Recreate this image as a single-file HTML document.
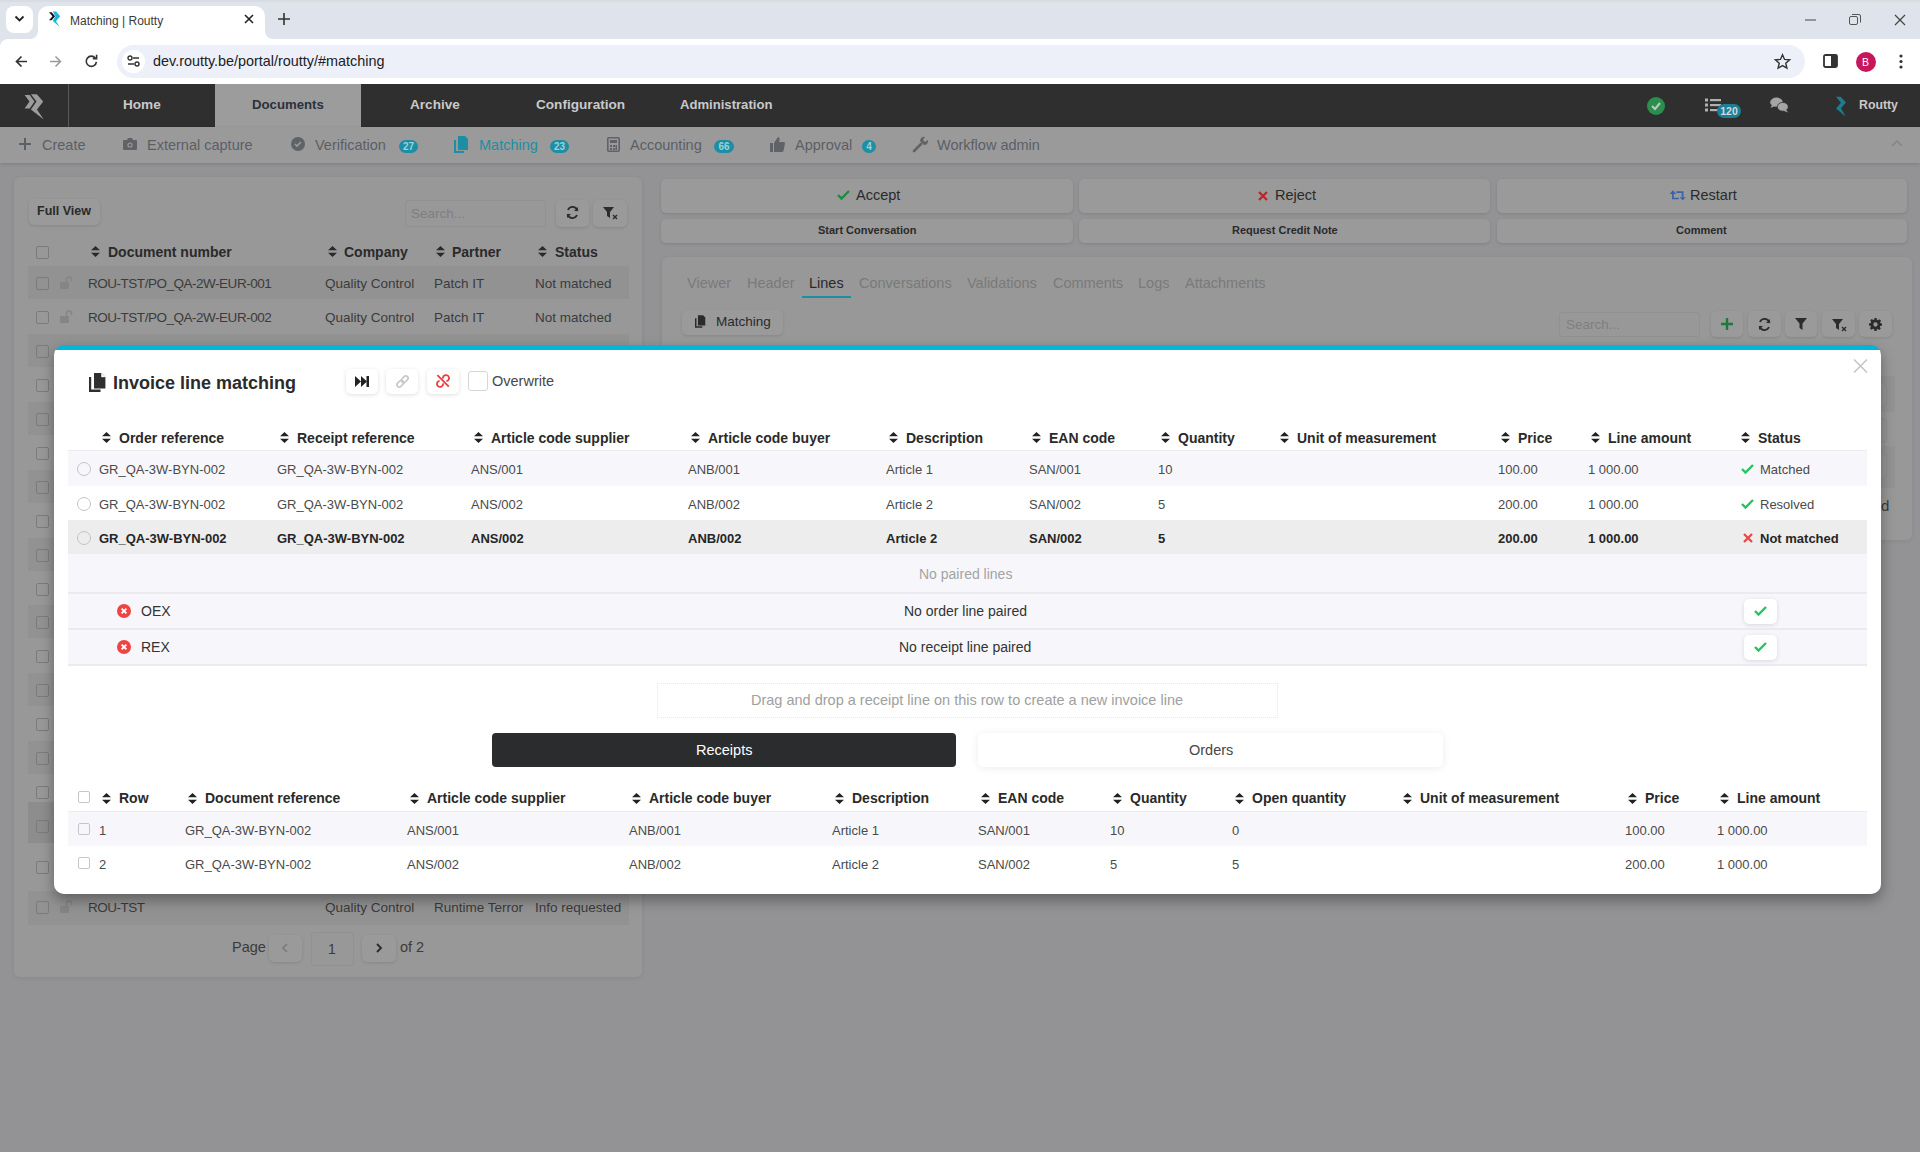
<!DOCTYPE html>
<html><head><meta charset="utf-8">
<style>
*{box-sizing:border-box;margin:0;padding:0}
html,body{width:1920px;height:1152px;overflow:hidden;background:#939395;font-family:"Liberation Sans",sans-serif;position:relative}
.a{position:absolute}
.t{position:absolute;white-space:nowrap;line-height:1}
svg{position:absolute;overflow:visible}
/* chrome */
#tabstrip{left:0;top:0;width:1920px;height:52px;background:#dfe3eb}
#toolbar{left:0;top:39px;width:1920px;height:45px;background:#fff}
#omni{left:117px;top:45px;width:1688px;height:33px;border-radius:17px;background:#edf0f8}
/* app */
#nav{left:0;top:84px;width:1920px;height:43px;background:#2f2f2f}
#subnav{left:0;top:127px;width:1920px;height:36px;background:#9a9a9a;box-shadow:0 1px 3px rgba(0,0,0,.15)}
.navt{font-size:13.6px;font-weight:700;color:#c9c9c9}
.subt{font-size:14.5px;color:#5a5f66;margin-top:1px}
.badge{position:absolute;height:13px;border-radius:7px;background:#1d8ea4;color:#9fd0da;font-size:10px;font-weight:700;line-height:13px;text-align:center}
.panel{background:#989898;border-radius:6px;box-shadow:0 1px 4px rgba(0,0,0,.07)}
.pbtn{background:#9a9a9a;border-radius:5px;box-shadow:0 1px 3px rgba(0,0,0,.12)}
.bgrow{position:absolute;left:28px;width:601px;height:34px}
.bgrow.s{background:#929292}
.bgcb{position:absolute;left:36px;width:13px;height:13px;border:1px solid #7b7b7b;border-radius:2px}
.bgt{font-size:13.5px;color:#3b3b3b}
/* modal */
#modal{left:54px;top:345px;width:1827px;height:549px;background:linear-gradient(#00b5dc 0,#00b5dc 5px,#fff 5px);border-radius:10px;box-shadow:0 6px 14px rgba(0,0,0,.35)}
.hd{font-size:14px;font-weight:700;color:#2a2a2a}
.dt{font-size:13px;color:#4a4a4a}
.dtb{font-size:13px;font-weight:700;color:#262626}
.row{position:absolute;left:68px;width:1799px}
.radio{position:absolute;width:14px;height:14px;border:1px solid #c4c4c4;border-radius:50%}
.cb{position:absolute;width:12px;height:12px;border:1px solid #c6c6c6;border-radius:2px}
.mbtn{position:absolute;background:#fff;border-radius:5px;box-shadow:0 1px 4px rgba(0,0,0,.13)}
</style></head><body>

<!-- ============ CHROME ============ -->
<div id="tabstrip" class="a"></div>
<div class="a" style="left:0;top:0;width:1920px;height:2px;background:#d8dde2"></div>
<div class="a" style="left:38px;top:6px;width:227px;height:40px;background:#fff;border-radius:10px 10px 0 0"></div>
<div id="toolbar" class="a" style="border-radius:8px 0 0 0"></div>
<div class="a" style="left:30px;top:31px;width:8px;height:8px;background:#fff"></div>
<div class="a" style="left:22px;top:23px;width:16px;height:16px;background:#dfe3eb;border-radius:0 0 8px 0"></div>
<div class="a" style="left:265px;top:31px;width:8px;height:8px;background:#fff"></div>
<div class="a" style="left:265px;top:23px;width:16px;height:16px;background:#dfe3eb;border-radius:0 0 0 8px"></div>
<div class="a" style="left:6px;top:6px;width:27px;height:27px;background:#fff;border-radius:8px"></div>
<svg style="left:14px;top:15px" width="11" height="8" viewBox="0 0 11 8"><path d="M1.5 1.5 L5.5 5.5 L9.5 1.5" fill="none" stroke="#222" stroke-width="1.8"/></svg>
<svg style="left:44px;top:8px" width="22" height="22" viewBox="0 0 22 22"><path d="M5 4.2H7.6L11.1 8.2L7.6 12.2H5L8.5 8.2Z" fill="#111"/><path d="M8.8 3.4H12.2L16.2 8.2L12 13.2L15.6 18.7L8.8 13L11.5 8.2Z" fill="#1ab8dc"/></svg>
<div class="t" style="left:70px;top:14.5px;font-size:12px;color:#3a3a3a">Matching | Routty</div>
<svg style="left:244px;top:14px" width="10" height="10" viewBox="0 0 10 10"><path d="M1 1L9 9M9 1L1 9" stroke="#222" stroke-width="1.6"/></svg>
<svg style="left:278px;top:13px" width="12" height="12" viewBox="0 0 12 12"><path d="M6 0V12M0 6H12" stroke="#333" stroke-width="1.6"/></svg>
<!-- window controls -->
<svg style="left:1805px;top:19px" width="11" height="2"><path d="M0 1H11" stroke="#444" stroke-width="1"/></svg>
<svg style="left:1849px;top:14px" width="12" height="11" viewBox="0 0 12 11"><rect x="0.5" y="2.5" width="8" height="8" rx="1.5" fill="none" stroke="#555" stroke-width="1"/><path d="M3 0.5H10A1.5 1.5 0 0 1 11.5 2V8.5" fill="none" stroke="#555" stroke-width="1"/></svg>
<svg style="left:1894px;top:14px" width="12" height="12" viewBox="0 0 12 12"><path d="M1 1L11 11M11 1L1 11" stroke="#444" stroke-width="1.2"/></svg>
<!-- toolbar -->
<div id="omni" class="a"></div>
<svg style="left:15px;top:55px" width="13" height="13" viewBox="0 0 13 13"><path d="M12 6.5H1.5M6.5 1.5L1.5 6.5L6.5 11.5" fill="none" stroke="#333" stroke-width="1.7"/></svg>
<svg style="left:49px;top:55px" width="13" height="13" viewBox="0 0 13 13"><path d="M1 6.5H11.5M6.5 1.5L11.5 6.5L6.5 11.5" fill="none" stroke="#9a9a9a" stroke-width="1.5"/></svg>
<svg style="left:85px;top:55px" width="13" height="13" viewBox="0 0 13 13"><path d="M10.4 3.2A5.1 5.1 0 1 0 11.4 6.8" fill="none" stroke="#333" stroke-width="1.6"/><path d="M7.8 3.6H11.6V-0.2" fill="none" stroke="#333" stroke-width="1.6"/></svg>
<div class="a" style="left:122px;top:50px;width:23px;height:23px;border-radius:50%;background:#fff"></div>
<svg style="left:127px;top:55px" width="13" height="12" viewBox="0 0 13 12"><circle cx="3" cy="3" r="2" fill="none" stroke="#333" stroke-width="1.4"/><path d="M6 3H12" stroke="#333" stroke-width="1.5"/><circle cx="10" cy="9" r="2" fill="none" stroke="#333" stroke-width="1.4"/><path d="M1 9H7" stroke="#333" stroke-width="1.5"/></svg>
<div class="t" style="left:153px;top:54px;font-size:14.4px;color:#202124">dev.routty.be/portal/routty/#matching</div>
<svg style="left:1774px;top:53px" width="17" height="17" viewBox="0 0 24 24"><path d="M12 2.5l2.9 6.6 7.1.6-5.4 4.7 1.6 7-6.2-3.7-6.2 3.7 1.6-7L2 9.7l7.1-.6z" fill="none" stroke="#333" stroke-width="2"/></svg>
<svg style="left:1823px;top:54px" width="15" height="14" viewBox="0 0 15 14"><rect x="1" y="1" width="13" height="12" rx="1.5" fill="none" stroke="#333" stroke-width="1.8"/><rect x="8" y="1" width="6" height="12" fill="#333"/></svg>
<div class="a" style="left:1856px;top:52px;width:20px;height:20px;border-radius:50%;background:#c8165a"></div>
<div class="t" style="left:1862px;top:57px;font-size:10.5px;color:#fff">B</div>
<svg style="left:1899px;top:54px" width="4" height="15" viewBox="0 0 4 15"><circle cx="2" cy="2" r="1.6" fill="#333"/><circle cx="2" cy="7.5" r="1.6" fill="#333"/><circle cx="2" cy="13" r="1.6" fill="#333"/></svg>

<!-- ============ APP NAV ============ -->
<div id="nav" class="a"></div>
<div class="a" style="left:68px;top:84px;width:1px;height:43px;background:#5a5a5a"></div>
<svg style="left:14px;top:88px" width="46" height="36" viewBox="0 0 46 36"><path d="M10.6 7H15.7L20.5 13.6L15.7 20.6H10.6L15.5 13.6Z" fill="#9c9c9c"/><path d="M16.9 6.2H22.8L29.2 13.6L23 21.6L29.7 31.6L16.9 21.6L22.5 13.6Z" fill="#9c9c9c"/></svg>
<div class="t navt" style="left:123px;top:98px">Home</div>
<div class="a" style="left:215px;top:84px;width:146px;height:43px;background:#9c9c9c"></div>
<div class="t navt" style="left:252px;top:98px;color:#2b323b;font-size:13.2px">Documents</div>
<div class="t navt" style="left:410px;top:98px">Archive</div>
<div class="t navt" style="left:536px;top:98px">Configuration</div>
<div class="t navt" style="left:680px;top:98px;font-size:13.1px">Administration</div>
<div class="a" style="left:1647px;top:97px;width:18px;height:18px;border-radius:50%;background:#2a8e4c"></div>
<svg style="left:1651px;top:102px" width="10" height="8" viewBox="0 0 10 8"><path d="M1 4L4 7L9 1" fill="none" stroke="#c4c4c4" stroke-width="2"/></svg>
<svg style="left:1705px;top:98px" width="18" height="14" viewBox="0 0 18 14"><rect x="0" y="0.5" width="3" height="3" fill="#b0b0b0"/><rect x="0" y="5.5" width="3" height="3" fill="#b0b0b0"/><rect x="0" y="10.5" width="3" height="3" fill="#b0b0b0"/><rect x="5" y="1" width="11" height="2.2" fill="#b0b0b0"/><rect x="5" y="6" width="11" height="2.2" fill="#b0b0b0"/><rect x="5" y="11" width="11" height="2.2" fill="#b0b0b0"/></svg>
<div class="badge" style="left:1717px;top:104px;width:24px;height:14px;line-height:14px;font-size:10.5px;color:#cfdadd;font-weight:700;background:#1d7f93">120</div>
<svg style="left:1770px;top:97px" width="19" height="16" viewBox="0 0 19 16"><ellipse cx="6.5" cy="5.2" rx="6.3" ry="4.6" fill="#a5a5a5"/><path d="M2 8L0.5 11L5 9Z" fill="#a5a5a5"/><ellipse cx="12.8" cy="9.8" rx="5.5" ry="4.4" fill="#a5a5a5" stroke="#2f2f2f" stroke-width="0.8"/><path d="M16 12.5L18 15.5L13.5 13.8Z" fill="#a5a5a5"/></svg>
<svg style="left:1830px;top:90px" width="24" height="32" viewBox="0 0 24 32"><path d="M6 6.7H10.7L15.9 12.6L11 18.3L15.7 26.7L6.1 18.5L10.9 12.8Z" fill="#1b7d8f"/></svg>
<div class="t navt" style="left:1859px;top:99px;font-size:12.3px">Routty</div>

<!-- ============ SUB NAV ============ -->
<div id="subnav" class="a"></div>
<svg style="left:19px;top:138px" width="12" height="12" viewBox="0 0 12 12"><path d="M6 0V12M0 6H12" stroke="#5a5f66" stroke-width="2"/></svg>
<div class="t subt" style="left:42px;top:137px">Create</div>
<svg style="left:123px;top:138px" width="14" height="12" viewBox="0 0 14 12"><path d="M0 3Q0 2 1 2H4L5 0H9L10 2H13Q14 2 14 3V11Q14 12 13 12H1Q0 12 0 11Z" fill="#5f6368"/><circle cx="7" cy="7" r="2.6" fill="#9a9a9a"/><circle cx="7" cy="7" r="1.5" fill="#5f6368"/></svg>
<div class="t subt" style="left:147px;top:137px">External capture</div>
<div class="a" style="left:291px;top:137px;width:14px;height:14px;border-radius:50%;background:#5f6368"></div>
<svg style="left:294px;top:141px" width="8" height="6" viewBox="0 0 8 6"><path d="M1 3L3 5L7 1" fill="none" stroke="#9a9a9a" stroke-width="1.6"/></svg>
<div class="t subt" style="left:315px;top:137px">Verification</div>
<div class="badge" style="left:399px;top:140px;width:19px">27</div>
<svg style="left:454px;top:136px" width="15" height="17" viewBox="0 0 15 17"><path d="M0 4H2V15H10V17H0Z" fill="#1d8ea4"/><path d="M4 0H11L14 3V14H4Z" fill="#1d8ea4"/></svg>
<div class="t subt" style="left:479px;top:137px;color:#1d8ea4">Matching</div>
<div class="badge" style="left:550px;top:140px;width:19px">23</div>
<svg style="left:607px;top:137px" width="13" height="15" viewBox="0 0 13 15"><rect x="0.8" y="0.8" width="11.4" height="13.4" rx="1" fill="none" stroke="#5f6368" stroke-width="1.6"/><rect x="3" y="3" width="7" height="3" fill="#5f6368"/><rect x="3" y="8" width="2" height="2" fill="#5f6368"/><rect x="6" y="8" width="2" height="2" fill="#5f6368"/><rect x="3" y="11" width="2" height="2" fill="#5f6368"/><rect x="6" y="11" width="2" height="2" fill="#5f6368"/><rect x="8.5" y="8" width="1.5" height="5" fill="#5f6368"/></svg>
<div class="t subt" style="left:630px;top:137px">Accounting</div>
<div class="badge" style="left:714px;top:140px;width:20px">66</div>
<svg style="left:770px;top:137px" width="15" height="15" viewBox="0 0 15 15"><rect x="0" y="6" width="3" height="9" fill="#5f6368"/><path d="M4 6L8 0Q10 0 9.5 3L9 5H14Q15 5 15 6.5L13.5 14Q13 15 12 15H4Z" fill="#5f6368"/></svg>
<div class="t subt" style="left:795px;top:137px">Approval</div>
<div class="badge" style="left:862px;top:140px;width:14px">4</div>
<svg style="left:913px;top:137px" width="15" height="15" viewBox="0 0 15 15"><path d="M1 14L8 7" stroke="#5f6368" stroke-width="2.6" stroke-linecap="round"/><path d="M7 4A4 4 0 0 1 12 0L10 3L12 5L15 3A4 4 0 0 1 11 8" fill="#5f6368"/></svg>
<div class="t subt" style="left:937px;top:137px">Workflow admin</div>
<svg style="left:1891px;top:140px" width="12" height="7" viewBox="0 0 12 7"><path d="M1 6L6 1L11 6" fill="none" stroke="#858585" stroke-width="1.5"/></svg>

<!-- ============ LEFT PANEL ============ -->
<div class="a panel" style="left:14px;top:177px;width:628px;height:800px"></div>
<div class="a pbtn" style="left:29px;top:199px;width:71px;height:26px"></div>
<div class="t" style="left:37px;top:205px;font-size:12.5px;font-weight:700;color:#2a2a2a">Full View</div>
<div class="a" style="left:405px;top:200px;width:141px;height:27px;border:1px solid #919191;border-radius:3px"></div>
<div class="t" style="left:411px;top:207px;font-size:13.5px;color:#7f7f7f">Search...</div>
<div class="a pbtn" style="left:556px;top:200px;width:33px;height:27px"></div>
<svg style="left:566px;top:206px" width="13" height="13" viewBox="0 0 13 13"><path d="M11.5 5A5 5 0 0 0 2 4M1.5 8A5 5 0 0 0 11 9" fill="none" stroke="#2c2c2c" stroke-width="1.8"/><path d="M12 1V5H8Z" fill="#2c2c2c"/><path d="M1 12V8H5Z" fill="#2c2c2c"/></svg>
<div class="a pbtn" style="left:593px;top:200px;width:34px;height:27px"></div>
<svg style="left:603px;top:207px" width="15" height="13" viewBox="0 0 15 13"><path d="M0 0H11L7 5V11L4 9V5Z" fill="#2c2c2c"/><path d="M10 8L14 12M14 8L10 12" stroke="#2c2c2c" stroke-width="1.4"/></svg>
<div class="bgcb" style="top:246px"></div>
<div id="bghead"></div>
<div class="a" style="left:28px;top:266px;width:601px;height:1px;background:#8c8c8c"></div>

<!-- ============ RIGHT PANEL ============ -->
<div class="a pbtn" style="left:661px;top:179px;width:412px;height:34px"></div>
<div class="a pbtn" style="left:1079px;top:179px;width:411px;height:34px"></div>
<div class="a pbtn" style="left:1497px;top:179px;width:410px;height:34px"></div>
<svg style="left:837px;top:190px" width="13" height="10" viewBox="0 0 13 10"><path d="M1 5L4.5 8.5L12 1" fill="none" stroke="#1f8a3e" stroke-width="2.4"/></svg>
<div class="t" style="left:856px;top:188px;font-size:14.5px;color:#2a2a2a">Accept</div>
<svg style="left:1258px;top:191px" width="10" height="10" viewBox="0 0 10 10"><path d="M1 1L9 9M9 1L1 9" stroke="#b8282a" stroke-width="2.2"/></svg>
<div class="t" style="left:1275px;top:188px;font-size:14.5px;color:#2a2a2a">Reject</div>
<svg style="left:1668px;top:189px" width="20" height="13" viewBox="0 0 20 13"><path d="M4.9 1.2L8.2 5H1.6Z" fill="#3a63ad"/><path d="M4.9 4V9.5H10.8M8.3 3.2H14.6V8.5" fill="none" stroke="#3a63ad" stroke-width="1.7"/><path d="M11.6 8.2H17.8L14.7 11.2Z" fill="#3a63ad"/></svg>
<div class="t" style="left:1690px;top:188px;font-size:14.5px;color:#2a2a2a">Restart</div>
<div class="a pbtn" style="left:661px;top:219px;width:412px;height:24px"></div>
<div class="a pbtn" style="left:1079px;top:219px;width:411px;height:24px"></div>
<div class="a pbtn" style="left:1497px;top:219px;width:410px;height:24px"></div>
<div class="t" style="left:818px;top:225px;font-size:11px;font-weight:700;color:#2a2a2a">Start Conversation</div>
<div class="t" style="left:1232px;top:225px;font-size:11px;font-weight:700;color:#2a2a2a">Request Credit Note</div>
<div class="t" style="left:1676px;top:225px;font-size:11px;font-weight:700;color:#2a2a2a">Comment</div>
<div class="a panel" style="left:662px;top:257px;width:1250px;height:283px"></div>
<div class="t" style="left:687px;top:276px;font-size:14.5px;color:#7a7a7a">Viewer</div>
<div class="t" style="left:747px;top:276px;font-size:14.5px;color:#7a7a7a">Header</div>
<div class="t" style="left:809px;top:276px;font-size:14.5px;color:#2a2a2a">Lines</div>
<div class="a" style="left:802px;top:296px;width:49px;height:2px;background:#1d8ea4"></div>
<div class="t" style="left:859px;top:276px;font-size:14.5px;color:#7a7a7a">Conversations</div>
<div class="t" style="left:967px;top:276px;font-size:14.5px;color:#7a7a7a">Validations</div>
<div class="t" style="left:1053px;top:276px;font-size:14.5px;color:#7a7a7a">Comments</div>
<div class="t" style="left:1138px;top:276px;font-size:14.5px;color:#7a7a7a">Logs</div>
<div class="t" style="left:1185px;top:276px;font-size:14.5px;color:#7a7a7a">Attachments</div>
<div class="a pbtn" style="left:682px;top:310px;width:101px;height:25px"></div>
<svg style="left:695px;top:315px" width="11" height="13" viewBox="0 0 15 17"><path d="M0 4H2V15H10V17H0Z" fill="#2a2a2a"/><path d="M4 0H11L14 3V14H4Z" fill="#2a2a2a"/></svg>
<div class="t" style="left:716px;top:315px;font-size:13.5px;color:#2a2a2a">Matching</div>
<div class="a" style="left:1559px;top:312px;width:141px;height:25px;border:1px solid #919191;border-radius:3px"></div>
<div class="t" style="left:1566px;top:318px;font-size:13.5px;color:#7f7f7f">Search...</div>
<div class="a pbtn" style="left:1711px;top:311px;width:32px;height:26px"></div>
<div class="a pbtn" style="left:1748px;top:311px;width:33px;height:26px"></div>
<div class="a pbtn" style="left:1785px;top:311px;width:32px;height:26px"></div>
<div class="a pbtn" style="left:1822px;top:311px;width:33px;height:26px"></div>
<div class="a pbtn" style="left:1859px;top:311px;width:33px;height:26px"></div>
<svg style="left:1721px;top:318px" width="12" height="12" viewBox="0 0 12 12"><path d="M6 0V12M0 6H12" stroke="#1d7a3a" stroke-width="2.4"/></svg>
<svg style="left:1758px;top:318px" width="13" height="13" viewBox="0 0 13 13"><path d="M11.5 5A5 5 0 0 0 2 4M1.5 8A5 5 0 0 0 11 9" fill="none" stroke="#2c2c2c" stroke-width="1.8"/><path d="M12 1V5H8Z" fill="#2c2c2c"/><path d="M1 12V8H5Z" fill="#2c2c2c"/></svg>
<svg style="left:1795px;top:318px" width="12" height="12" viewBox="0 0 12 12"><path d="M0 0H12L7.5 5.5V12L4.5 10V5.5Z" fill="#2c2c2c"/></svg>
<svg style="left:1832px;top:319px" width="15" height="13" viewBox="0 0 15 13"><path d="M0 0H11L7 5V11L4 9V5Z" fill="#2c2c2c"/><path d="M10 8L14 12M14 8L10 12" stroke="#2c2c2c" stroke-width="1.4"/></svg>
<svg style="left:1869px;top:318px" width="13" height="13" viewBox="0 0 24 24"><path d="M10 0h4l.6 3.2 2.2.9 2.7-1.9 2.8 2.8-1.9 2.7.9 2.2L24 10v4l-3.2.6-.9 2.2 1.9 2.7-2.8 2.8-2.7-1.9-2.2.9L14 24h-4l-.6-3.2-2.2-.9-2.7 1.9-2.8-2.8 1.9-2.7-.9-2.2L0 14v-4l3.2-.6.9-2.2L2.2 4.5 5 1.7l2.7 1.9 2.2-.9z M12 8a4 4 0 1 0 0 8a4 4 0 1 0 0-8z" fill="#2c2c2c" fill-rule="evenodd"/></svg>

<svg style="left:91px;top:246px" width="9" height="11" viewBox="0 0 9 11"><path d="M4.5 0L9 4.2H0Z M4.5 11L9 6.8H0Z" fill="#2a2a2a"/></svg>
<div class="t " style="left:108px;top:245px;font-size:14px;font-weight:700;color:#2a2a2a">Document number</div>
<svg style="left:328px;top:246px" width="9" height="11" viewBox="0 0 9 11"><path d="M4.5 0L9 4.2H0Z M4.5 11L9 6.8H0Z" fill="#2a2a2a"/></svg>
<div class="t " style="left:344px;top:245px;font-size:14px;font-weight:700;color:#2a2a2a">Company</div>
<svg style="left:436px;top:246px" width="9" height="11" viewBox="0 0 9 11"><path d="M4.5 0L9 4.2H0Z M4.5 11L9 6.8H0Z" fill="#2a2a2a"/></svg>
<div class="t " style="left:452px;top:245px;font-size:14px;font-weight:700;color:#2a2a2a">Partner</div>
<svg style="left:538px;top:246px" width="9" height="11" viewBox="0 0 9 11"><path d="M4.5 0L9 4.2H0Z M4.5 11L9 6.8H0Z" fill="#2a2a2a"/></svg>
<div class="t " style="left:555px;top:245px;font-size:14px;font-weight:700;color:#2a2a2a">Status</div>
<div class="a" style="left:28px;top:266px;width:601px;height:33px;background:#929292"></div>
<div class="bgcb" style="top:277px"></div>
<svg style="left:60px;top:276px" width="14" height="13" viewBox="0 0 14 13"><rect x="0" y="6" width="9" height="7" rx="1" fill="#858585"/><path d="M6.5 6V3.5A2.5 2.5 0 0 1 11.5 3.5V5" fill="none" stroke="#858585" stroke-width="1.6"/></svg>
<div class="t bgt" style="left:88px;top:277px;letter-spacing:-0.48px">ROU-TST/PO_QA-2W-EUR-001</div>
<div class="t bgt" style="left:325px;top:277px;">Quality Control</div>
<div class="t bgt" style="left:434px;top:277px;">Patch IT</div>
<div class="t bgt" style="left:535px;top:277px;">Not matched</div>
<div class="bgcb" style="top:311px"></div>
<svg style="left:60px;top:310px" width="14" height="13" viewBox="0 0 14 13"><rect x="0" y="6" width="9" height="7" rx="1" fill="#858585"/><path d="M6.5 6V3.5A2.5 2.5 0 0 1 11.5 3.5V5" fill="none" stroke="#858585" stroke-width="1.6"/></svg>
<div class="t bgt" style="left:88px;top:311px;letter-spacing:-0.48px">ROU-TST/PO_QA-2W-EUR-002</div>
<div class="t bgt" style="left:325px;top:311px;">Quality Control</div>
<div class="t bgt" style="left:434px;top:311px;">Patch IT</div>
<div class="t bgt" style="left:535px;top:311px;">Not matched</div>
<div class="a" style="left:28px;top:334px;width:601px;height:33px;background:#929292"></div>
<div class="bgcb" style="top:345px"></div>
<div class="bgcb" style="top:379px"></div>
<div class="a" style="left:28px;top:402px;width:601px;height:33px;background:#929292"></div>
<div class="bgcb" style="top:413px"></div>
<div class="bgcb" style="top:447px"></div>
<div class="a" style="left:28px;top:470px;width:601px;height:33px;background:#929292"></div>
<div class="bgcb" style="top:481px"></div>
<div class="bgcb" style="top:515px"></div>
<div class="a" style="left:28px;top:538px;width:601px;height:33px;background:#929292"></div>
<div class="bgcb" style="top:549px"></div>
<div class="bgcb" style="top:583px"></div>
<div class="a" style="left:28px;top:605px;width:601px;height:33px;background:#929292"></div>
<div class="bgcb" style="top:616px"></div>
<div class="bgcb" style="top:650px"></div>
<div class="a" style="left:28px;top:673px;width:601px;height:33px;background:#929292"></div>
<div class="bgcb" style="top:684px"></div>
<div class="bgcb" style="top:718px"></div>
<div class="a" style="left:28px;top:741px;width:601px;height:33px;background:#929292"></div>
<div class="bgcb" style="top:752px"></div>
<div class="bgcb" style="top:786px"></div>
<div class="a" style="left:28px;top:802px;width:601px;height:41px;background:#8d8d8d"></div>
<div class="bgcb" style="top:820px"></div>
<div class="bgcb" style="top:861px"></div>
<div class="a" style="left:28px;top:891px;width:601px;height:34px;background:#929292"></div>
<div class="bgcb" style="top:901px"></div>
<svg style="left:60px;top:900px" width="14" height="13" viewBox="0 0 14 13"><rect x="0" y="6" width="9" height="7" rx="1" fill="#858585"/><path d="M6.5 6V3.5A2.5 2.5 0 0 1 11.5 3.5V5" fill="none" stroke="#858585" stroke-width="1.6"/></svg>
<div class="t bgt" style="left:88px;top:901px;letter-spacing:-0.48px">ROU-TST</div>
<div class="t bgt" style="left:325px;top:901px;">Quality Control</div>
<div class="t bgt" style="left:434px;top:901px;">Runtime Terror</div>
<div class="t bgt" style="left:535px;top:901px;">Info requested</div>
<div class="t bgt" style="left:232px;top:940px;font-size:14.5px">Page</div>
<div class="a pbtn" style="left:269px;top:935px;width:33px;height:27px"></div>
<svg style="left:282px;top:943px" width="6" height="10" viewBox="0 0 6 10"><path d="M5 1L1 5L5 9" fill="none" stroke="#7a7a7a" stroke-width="1.6"/></svg>
<div class="a" style="left:311px;top:932px;width:43px;height:34px;border:1px solid #919191;border-radius:3px"></div>
<div class="t bgt" style="left:328px;top:942px;font-size:14px">1</div>
<div class="a pbtn" style="left:362px;top:935px;width:34px;height:27px"></div>
<svg style="left:376px;top:943px" width="6" height="10" viewBox="0 0 6 10"><path d="M1 1L5 5L1 9" fill="none" stroke="#2a2a2a" stroke-width="1.8"/></svg>
<div class="t bgt" style="left:400px;top:940px;font-size:14.5px">of 2</div>
<div class="a" style="left:1860px;top:376px;width:35px;height:36px;background:#939393"></div>
<div class="a" style="left:1860px;top:446px;width:35px;height:42px;background:#939393"></div>
<div class="a" style="left:1840px;top:383px;width:47px;height:24px;border:1px solid #8f8f8f;border-radius:4px;background:#969696"></div>
<div class="a" style="left:1840px;top:418px;width:47px;height:25px;border:1px solid #8f8f8f;border-radius:4px;background:#969696"></div>
<div class="a" style="left:1840px;top:453px;width:47px;height:25px;border:1px solid #8f8f8f;border-radius:4px;background:#969696"></div>
<div class="t bgt" style="left:1881px;top:498px;font-size:15px">d</div>

<!-- ============ MODAL ============ -->
<div id="modal" class="a"></div>
<svg style="left:89px;top:373px" width="17" height="19" viewBox="0 0 17 19"><path d="M0 4H2.2V16.6H11.5V19H0Z" fill="#2f2f2f"/><path d="M5 0H12.5L16.4 3.9V15.6H5Z" fill="#2f2f2f"/><path d="M12.5 0V3.9H16.4" fill="#fff" stroke="#fff" stroke-width="0.5"/></svg>
<div class="t " style="left:113px;top:374px;font-size:18px;font-weight:700;color:#2b2b2b">Invoice line matching</div>
<div class="mbtn" style="left:346px;top:369px;width:32px;height:25px"></div>
<div class="mbtn" style="left:386px;top:369px;width:32px;height:25px"></div>
<div class="mbtn" style="left:427px;top:369px;width:32px;height:25px"></div>
<svg style="left:355px;top:376px" width="14" height="11" viewBox="0 0 14 11"><path d="M0 0L6 5.5L0 11Z M6 0L12 5.5L6 11Z" fill="#222"/><rect x="11.5" y="0" width="2.5" height="11" fill="#222"/></svg>
<svg style="left:395px;top:374px" width="15" height="15" viewBox="0 0 15 15"><g transform="rotate(45 7.5 7.5)" fill="none" stroke="#c8c8c8" stroke-width="1.7"><rect x="5.2" y="0.6" width="4.6" height="7.6" rx="2.3"/><rect x="5.2" y="6.8" width="4.6" height="7.6" rx="2.3"/></g></svg>
<svg style="left:436px;top:374px" width="14" height="14" viewBox="0 0 14 14"><g fill="none" stroke="#ea3d3d" stroke-width="1.8"><path d="M1.4 1.2L12.8 12.6"/><path d="M6.9 4.6A3.1 3.1 0 1 1 10.4 7.2"/><path d="M7.1 9.4A3.1 3.1 0 1 1 3.6 6.8"/></g></svg>
<div class="a" style="left:468px;top:371px;width:20px;height:20px;border:1px solid #d6d6d6;border-radius:3px"></div>
<div class="t " style="left:492px;top:374px;font-size:14.5px;color:#474747">Overwrite</div>
<svg style="left:1853px;top:359px" width="15" height="14" viewBox="0 0 15 14"><path d="M1 0.5L14 13.5M14 0.5L1 13.5" stroke="#c6c6c6" stroke-width="1.6"/></svg>
<svg style="left:102px;top:432px" width="9" height="11" viewBox="0 0 9 11"><path d="M4.5 0L9 4.2H0Z M4.5 11L9 6.8H0Z" fill="#222"/></svg>
<div class="t hd" style="left:119px;top:431px;">Order reference</div>
<svg style="left:280px;top:432px" width="9" height="11" viewBox="0 0 9 11"><path d="M4.5 0L9 4.2H0Z M4.5 11L9 6.8H0Z" fill="#222"/></svg>
<div class="t hd" style="left:297px;top:431px;">Receipt reference</div>
<svg style="left:474px;top:432px" width="9" height="11" viewBox="0 0 9 11"><path d="M4.5 0L9 4.2H0Z M4.5 11L9 6.8H0Z" fill="#222"/></svg>
<div class="t hd" style="left:491px;top:431px;">Article code supplier</div>
<svg style="left:691px;top:432px" width="9" height="11" viewBox="0 0 9 11"><path d="M4.5 0L9 4.2H0Z M4.5 11L9 6.8H0Z" fill="#222"/></svg>
<div class="t hd" style="left:708px;top:431px;">Article code buyer</div>
<svg style="left:889px;top:432px" width="9" height="11" viewBox="0 0 9 11"><path d="M4.5 0L9 4.2H0Z M4.5 11L9 6.8H0Z" fill="#222"/></svg>
<div class="t hd" style="left:906px;top:431px;">Description</div>
<svg style="left:1032px;top:432px" width="9" height="11" viewBox="0 0 9 11"><path d="M4.5 0L9 4.2H0Z M4.5 11L9 6.8H0Z" fill="#222"/></svg>
<div class="t hd" style="left:1049px;top:431px;">EAN code</div>
<svg style="left:1161px;top:432px" width="9" height="11" viewBox="0 0 9 11"><path d="M4.5 0L9 4.2H0Z M4.5 11L9 6.8H0Z" fill="#222"/></svg>
<div class="t hd" style="left:1178px;top:431px;">Quantity</div>
<svg style="left:1280px;top:432px" width="9" height="11" viewBox="0 0 9 11"><path d="M4.5 0L9 4.2H0Z M4.5 11L9 6.8H0Z" fill="#222"/></svg>
<div class="t hd" style="left:1297px;top:431px;">Unit of measurement</div>
<svg style="left:1501px;top:432px" width="9" height="11" viewBox="0 0 9 11"><path d="M4.5 0L9 4.2H0Z M4.5 11L9 6.8H0Z" fill="#222"/></svg>
<div class="t hd" style="left:1518px;top:431px;">Price</div>
<svg style="left:1591px;top:432px" width="9" height="11" viewBox="0 0 9 11"><path d="M4.5 0L9 4.2H0Z M4.5 11L9 6.8H0Z" fill="#222"/></svg>
<div class="t hd" style="left:1608px;top:431px;">Line amount</div>
<svg style="left:1741px;top:432px" width="9" height="11" viewBox="0 0 9 11"><path d="M4.5 0L9 4.2H0Z M4.5 11L9 6.8H0Z" fill="#222"/></svg>
<div class="t hd" style="left:1758px;top:431px;">Status</div>
<div class="a" style="left:68px;top:450px;width:1799px;height:1px;background:#ececf0"></div>
<div class="row" style="top:451px;height:35px;background:#f7f7fb"></div>
<div class="radio" style="left:77px;top:462px"></div>
<div class="t dt" style="left:99px;top:463px;">GR_QA-3W-BYN-002</div>
<div class="t dt" style="left:277px;top:463px;">GR_QA-3W-BYN-002</div>
<div class="t dt" style="left:471px;top:463px;">ANS/001</div>
<div class="t dt" style="left:688px;top:463px;">ANB/001</div>
<div class="t dt" style="left:886px;top:463px;">Article 1</div>
<div class="t dt" style="left:1029px;top:463px;">SAN/001</div>
<div class="t dt" style="left:1158px;top:463px;">10</div>
<div class="t dt" style="left:1498px;top:463px;">100.00</div>
<div class="t dt" style="left:1588px;top:463px;">1 000.00</div>
<svg style="left:1741px;top:464px" width="13" height="10" viewBox="0 0 13 10"><path d="M1 5L4.5 8.5L12 1" fill="none" stroke="#22c55e" stroke-width="2.4"/></svg>
<div class="t dt" style="left:1760px;top:463px;">Matched</div>
<div class="row" style="top:486px;height:34px;background:#ffffff"></div>
<div class="radio" style="left:77px;top:497px"></div>
<div class="t dt" style="left:99px;top:498px;">GR_QA-3W-BYN-002</div>
<div class="t dt" style="left:277px;top:498px;">GR_QA-3W-BYN-002</div>
<div class="t dt" style="left:471px;top:498px;">ANS/002</div>
<div class="t dt" style="left:688px;top:498px;">ANB/002</div>
<div class="t dt" style="left:886px;top:498px;">Article 2</div>
<div class="t dt" style="left:1029px;top:498px;">SAN/002</div>
<div class="t dt" style="left:1158px;top:498px;">5</div>
<div class="t dt" style="left:1498px;top:498px;">200.00</div>
<div class="t dt" style="left:1588px;top:498px;">1 000.00</div>
<svg style="left:1741px;top:499px" width="13" height="10" viewBox="0 0 13 10"><path d="M1 5L4.5 8.5L12 1" fill="none" stroke="#22c55e" stroke-width="2.4"/></svg>
<div class="t dt" style="left:1760px;top:498px;">Resolved</div>
<div class="row" style="top:520px;height:34px;background:#ededed"></div>
<div class="radio" style="left:77px;top:531px"></div>
<div class="t dtb" style="left:99px;top:532px;">GR_QA-3W-BYN-002</div>
<div class="t dtb" style="left:277px;top:532px;">GR_QA-3W-BYN-002</div>
<div class="t dtb" style="left:471px;top:532px;">ANS/002</div>
<div class="t dtb" style="left:688px;top:532px;">ANB/002</div>
<div class="t dtb" style="left:886px;top:532px;">Article 2</div>
<div class="t dtb" style="left:1029px;top:532px;">SAN/002</div>
<div class="t dtb" style="left:1158px;top:532px;">5</div>
<div class="t dtb" style="left:1498px;top:532px;">200.00</div>
<div class="t dtb" style="left:1588px;top:532px;">1 000.00</div>
<svg style="left:1743px;top:533px" width="10" height="10" viewBox="0 0 10 10"><path d="M1 1L9 9M9 1L1 9" stroke="#ef4444" stroke-width="2.2"/></svg>
<div class="t dtb" style="left:1760px;top:532px;">Not matched</div>
<div class="row" style="top:554px;height:112px;background:#f7f7fb"></div>
<div class="row" style="top:592px;height:2px;background:#ebebef"></div>
<div class="row" style="top:628px;height:2px;background:#ebebef"></div>
<div class="row" style="top:664px;height:2px;background:#ebebef"></div>
<div class="t " style="left:919px;top:567px;font-size:14px;color:#a3a3a3">No paired lines</div>
<svg style="left:117px;top:604px" width="14" height="14" viewBox="0 0 14 14"><circle cx="7" cy="7" r="7" fill="#ef4444"/><path d="M4.6 4.6L9.4 9.4M9.4 4.6L4.6 9.4" stroke="#fff" stroke-width="1.9"/></svg>
<div class="t " style="left:141px;top:604px;font-size:14px;color:#333">OEX</div>
<div class="t " style="left:904px;top:604px;font-size:14px;color:#333">No order line paired</div>
<div class="mbtn" style="left:1744px;top:599px;width:33px;height:25px"></div>
<svg style="left:1754px;top:606px" width="13" height="10" viewBox="0 0 13 10"><path d="M1 5L4.5 8.5L12 1" fill="none" stroke="#22c55e" stroke-width="2.4"/></svg>
<svg style="left:117px;top:640px" width="14" height="14" viewBox="0 0 14 14"><circle cx="7" cy="7" r="7" fill="#ef4444"/><path d="M4.6 4.6L9.4 9.4M9.4 4.6L4.6 9.4" stroke="#fff" stroke-width="1.9"/></svg>
<div class="t " style="left:141px;top:640px;font-size:14px;color:#333">REX</div>
<div class="t " style="left:899px;top:640px;font-size:14px;color:#333">No receipt line paired</div>
<div class="mbtn" style="left:1744px;top:635px;width:33px;height:25px"></div>
<svg style="left:1754px;top:642px" width="13" height="10" viewBox="0 0 13 10"><path d="M1 5L4.5 8.5L12 1" fill="none" stroke="#22c55e" stroke-width="2.4"/></svg>
<div class="a" style="left:657px;top:683px;width:621px;height:35px;border:1px dotted #e8e8e8"></div>
<div class="t " style="left:751px;top:693px;font-size:14.5px;color:#a0a0a0">Drag and drop a receipt line on this row to create a new invoice line</div>
<div class="a" style="left:492px;top:733px;width:464px;height:34px;background:#2b2c2e;border-radius:4px"></div>
<div class="t " style="left:696px;top:743px;font-size:14.5px;color:#fff">Receipts</div>
<div class="mbtn" style="left:978px;top:733px;width:465px;height:34px;box-shadow:0 1px 8px rgba(0,0,0,.08)"></div>
<div class="t " style="left:1189px;top:743px;font-size:14.5px;color:#474747">Orders</div>
<div class="cb" style="left:78px;top:791px"></div>
<svg style="left:102px;top:793px" width="9" height="11" viewBox="0 0 9 11"><path d="M4.5 0L9 4.2H0Z M4.5 11L9 6.8H0Z" fill="#222"/></svg>
<div class="t hd" style="left:119px;top:791px;">Row</div>
<svg style="left:188px;top:793px" width="9" height="11" viewBox="0 0 9 11"><path d="M4.5 0L9 4.2H0Z M4.5 11L9 6.8H0Z" fill="#222"/></svg>
<div class="t hd" style="left:205px;top:791px;">Document reference</div>
<svg style="left:410px;top:793px" width="9" height="11" viewBox="0 0 9 11"><path d="M4.5 0L9 4.2H0Z M4.5 11L9 6.8H0Z" fill="#222"/></svg>
<div class="t hd" style="left:427px;top:791px;">Article code supplier</div>
<svg style="left:632px;top:793px" width="9" height="11" viewBox="0 0 9 11"><path d="M4.5 0L9 4.2H0Z M4.5 11L9 6.8H0Z" fill="#222"/></svg>
<div class="t hd" style="left:649px;top:791px;">Article code buyer</div>
<svg style="left:835px;top:793px" width="9" height="11" viewBox="0 0 9 11"><path d="M4.5 0L9 4.2H0Z M4.5 11L9 6.8H0Z" fill="#222"/></svg>
<div class="t hd" style="left:852px;top:791px;">Description</div>
<svg style="left:981px;top:793px" width="9" height="11" viewBox="0 0 9 11"><path d="M4.5 0L9 4.2H0Z M4.5 11L9 6.8H0Z" fill="#222"/></svg>
<div class="t hd" style="left:998px;top:791px;">EAN code</div>
<svg style="left:1113px;top:793px" width="9" height="11" viewBox="0 0 9 11"><path d="M4.5 0L9 4.2H0Z M4.5 11L9 6.8H0Z" fill="#222"/></svg>
<div class="t hd" style="left:1130px;top:791px;">Quantity</div>
<svg style="left:1235px;top:793px" width="9" height="11" viewBox="0 0 9 11"><path d="M4.5 0L9 4.2H0Z M4.5 11L9 6.8H0Z" fill="#222"/></svg>
<div class="t hd" style="left:1252px;top:791px;">Open quantity</div>
<svg style="left:1403px;top:793px" width="9" height="11" viewBox="0 0 9 11"><path d="M4.5 0L9 4.2H0Z M4.5 11L9 6.8H0Z" fill="#222"/></svg>
<div class="t hd" style="left:1420px;top:791px;">Unit of measurement</div>
<svg style="left:1628px;top:793px" width="9" height="11" viewBox="0 0 9 11"><path d="M4.5 0L9 4.2H0Z M4.5 11L9 6.8H0Z" fill="#222"/></svg>
<div class="t hd" style="left:1645px;top:791px;">Price</div>
<svg style="left:1720px;top:793px" width="9" height="11" viewBox="0 0 9 11"><path d="M4.5 0L9 4.2H0Z M4.5 11L9 6.8H0Z" fill="#222"/></svg>
<div class="t hd" style="left:1737px;top:791px;">Line amount</div>
<div class="a" style="left:68px;top:811px;width:1799px;height:1px;background:#ececf0"></div>
<div class="row" style="top:812px;height:34px;background:#f7f7fb"></div>
<div class="cb" style="left:78px;top:823px"></div>
<div class="t dt" style="left:99px;top:824px;">1</div>
<div class="t dt" style="left:185px;top:824px;">GR_QA-3W-BYN-002</div>
<div class="t dt" style="left:407px;top:824px;">ANS/001</div>
<div class="t dt" style="left:629px;top:824px;">ANB/001</div>
<div class="t dt" style="left:832px;top:824px;">Article 1</div>
<div class="t dt" style="left:978px;top:824px;">SAN/001</div>
<div class="t dt" style="left:1110px;top:824px;">10</div>
<div class="t dt" style="left:1232px;top:824px;">0</div>
<div class="t dt" style="left:1625px;top:824px;">100.00</div>
<div class="t dt" style="left:1717px;top:824px;">1 000.00</div>
<div class="cb" style="left:78px;top:857px"></div>
<div class="t dt" style="left:99px;top:858px;">2</div>
<div class="t dt" style="left:185px;top:858px;">GR_QA-3W-BYN-002</div>
<div class="t dt" style="left:407px;top:858px;">ANS/002</div>
<div class="t dt" style="left:629px;top:858px;">ANB/002</div>
<div class="t dt" style="left:832px;top:858px;">Article 2</div>
<div class="t dt" style="left:978px;top:858px;">SAN/002</div>
<div class="t dt" style="left:1110px;top:858px;">5</div>
<div class="t dt" style="left:1232px;top:858px;">5</div>
<div class="t dt" style="left:1625px;top:858px;">200.00</div>
<div class="t dt" style="left:1717px;top:858px;">1 000.00</div>

</body></html>
